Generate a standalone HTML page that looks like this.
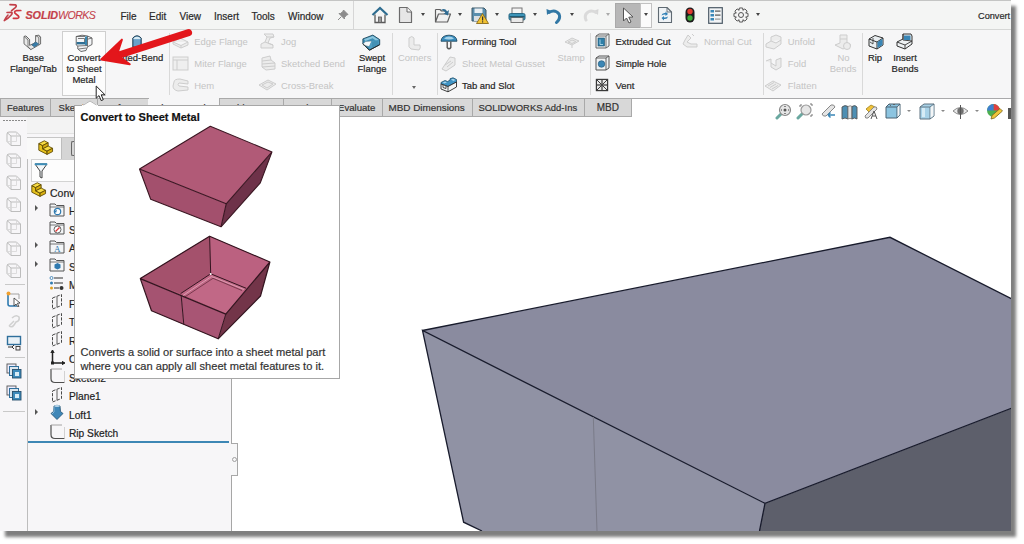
<!DOCTYPE html>
<html><head><meta charset="utf-8">
<style>
*{margin:0;padding:0;box-sizing:border-box}
html,body{width:1024px;height:544px;overflow:hidden;background:#fff;font-family:"Liberation Sans",sans-serif;color:#333}
.a{position:absolute}
#win{position:absolute;left:0;top:0;width:1011px;height:531px;background:#f3f3f3;overflow:hidden;box-shadow:5px 6px 3px rgba(0,0,0,.5)}
.t{position:absolute;white-space:nowrap;font-size:10px;line-height:12px;color:#2a2a2a;-webkit-text-stroke:0.2px currentColor}
</style></head><body>
<div id="win">

<div class="a" style="left:0px;top:0px;width:1012px;height:1px;background:#c4c5c4"></div>
<div class="a" style="left:0px;top:1px;width:1012px;height:28px;background:#f4f5f4"></div>
<div class="a" style="left:0px;top:29px;width:1012px;height:1px;background:#d6d7d6"></div>
<div class="a" style="left:0px;top:30px;width:1012px;height:68px;background:#f6f6f7"></div>
<div class="a" style="left:0px;top:98px;width:1012px;height:1px;background:#a9a9ab"></div>
<div class="a" style="left:0px;top:99px;width:632px;height:18px;background:#f6f6f7"></div>
<div class="a" style="left:232px;top:99px;width:780px;height:432px;background:#fff"></div>
<svg class="a" style="left:0;top:0" width="1012" height="531" viewBox="0 0 1012 531">
<polygon points="422.5,330.5 890,237.3 1012,299 1012,408 765,503.4" fill="#8a8b9f"/>
<polygon points="422.5,330.5 765,503.4 759.5,531 482,531 463.6,522.2" fill="#9092a4"/>
<polygon points="765,503.4 1012,408 1012,531 759.5,531" fill="#5d5f6b"/>
<polyline points="422.5,330.5 890,237.3 1012,299" fill="none" stroke="#181b2c" stroke-width="1.3"/>
<polyline points="482,531 463.6,522.2 422.5,330.5 765,503.4 1012,408" fill="none" stroke="#181b2c" stroke-width="1.3"/>
<line x1="765" y1="503.4" x2="759.5" y2="531" stroke="#181b2c" stroke-width="1.3"/>
<line x1="593.3" y1="417" x2="597" y2="531" stroke="#7a7b88" stroke-width="1"/>
</svg>
<svg class="a" style="left:0px;top:0px;" width="26" height="24" viewBox="0 0 26 24"><path d="M10 4.6 L15.3 4.8 Q17.2 5.6 15.3 7.6 L11.6 10.6" fill="none" stroke="#c23f48" stroke-width="1.7" stroke-linecap="round" stroke-linejoin="round"/>
<path d="M7 12.5 L11.6 12.2 Q12.8 13 11.2 15 Q8.5 18.3 4.3 20.6 Q6 17 8 15" fill="none" stroke="#c23f48" stroke-width="1.6" stroke-linecap="round" stroke-linejoin="round"/>
<path d="M20.8 10.5 L16.2 10.7 Q13.6 11.4 15.2 13.4 L18.4 16 Q19.8 18 17 18.3 L13.4 18.4" fill="none" stroke="#d0363f" stroke-width="1.7" stroke-linecap="round" stroke-linejoin="round"/></svg>
<div class="t" style="left:25.50px;top:9.46px;font-size:10.8px;color:#c4414a;font-weight:normal;font-weight:bold;font-style:italic;letter-spacing:-0.1px;-webkit-text-stroke:0.2px currentColor">SOLID<span style="font-weight:normal;font-size:10.6px;-webkit-text-stroke:0.1px currentColor;letter-spacing:-0.55px">WORKS</span></div>
<div class="t" style="left:120.50px;top:10.93px;font-size:10px;color:#2a2a2a;font-weight:normal;">File</div>
<div class="t" style="left:149.00px;top:10.93px;font-size:10px;color:#2a2a2a;font-weight:normal;">Edit</div>
<div class="t" style="left:179.50px;top:10.93px;font-size:10px;color:#2a2a2a;font-weight:normal;">View</div>
<div class="t" style="left:214.00px;top:10.93px;font-size:10px;color:#2a2a2a;font-weight:normal;">Insert</div>
<div class="t" style="left:251.50px;top:10.93px;font-size:10px;color:#2a2a2a;font-weight:normal;">Tools</div>
<div class="t" style="left:288.00px;top:10.93px;font-size:10px;color:#2a2a2a;font-weight:normal;">Window</div>
<svg class="a" style="left:337px;top:9px;" width="12" height="12" viewBox="0 0 12 12"><path d="M6.5 1 L11 5.5 L9.5 6 L7.5 8.5 L7.5 10 L2 4.5 L3.5 4.5 L6 2.5Z M4.3 7.7 L1 11" fill="#8c8c8c" stroke="#8c8c8c" stroke-width="1"/></svg>
<div class="a" style="left:353px;top:1px;width:1px;height:28px;background:#d6d6d6"></div>
<svg class="a" style="left:371px;top:6px;" width="18" height="18" viewBox="0 0 18 18"><path d="M1.5 9 L9 2 L16.5 9" fill="none" stroke="#2e6d90" stroke-width="2.2"/>
<path d="M4 8.5 V16.5 H14 V8.5" fill="#f4f4f4" stroke="#5a5a5a" stroke-width="1.3"/>
<rect x="7.5" y="11" width="3" height="5.5" fill="#9a9a9a" stroke="#5a5a5a" stroke-width="0.8"/></svg>
<svg class="a" style="left:398px;top:6px;" width="15" height="18" viewBox="0 0 15 18"><path d="M1.5 1.5 H9 L13.5 6 V16.5 H1.5Z" fill="#e6e6e6" stroke="#6b6b6b" stroke-width="1.2" stroke-linejoin="round"/>
<path d="M9 1.5 V6 H13.5" fill="#fafafa" stroke="#6b6b6b" stroke-width="1"/></svg>
<svg class="a" style="left:434px;top:6px;" width="18" height="18" viewBox="0 0 18 18"><path d="M1.5 3.5 H6 L7.5 5 H12 V8 M1.5 3.5 V16 H13.5 L16.5 8 H4.5 L1.5 16" fill="#f0f0f0" stroke="#5f5f5f" stroke-width="1.2" stroke-linejoin="round"/>
<path d="M7 4 Q11 1.5 13 5.5 L15 4 L14 9.5 L9.5 7.5 L11.5 6.8 Q10.5 4.5 7 4Z" fill="#2f6b92"/></svg>
<svg class="a" style="left:471px;top:7px;" width="18" height="17" viewBox="0 0 18 17"><path d="M1 1 H13 L15 3 V14 H1Z" fill="#5a8fae" stroke="#3d5868" stroke-width="1"/>
<rect x="3.5" y="1.5" width="8" height="4.5" fill="#e8eef2"/><rect x="3" y="9" width="9" height="5" fill="#d9dfe3"/>
<path d="M11.5 6.5 L17.5 16.5 H5.5Z" fill="#f1c232" stroke="#8a6a1a" stroke-width="0.9" stroke-linejoin="round"/>
<rect x="11" y="9.5" width="1.2" height="4" fill="#333"/><rect x="11" y="14.3" width="1.2" height="1.2" fill="#333"/></svg>
<svg class="a" style="left:508px;top:7px;" width="18" height="17" viewBox="0 0 18 17"><rect x="4" y="1" width="10" height="6" fill="#f4f4f4" stroke="#777" stroke-width="1"/>
<rect x="1" y="6.5" width="16" height="6.5" rx="1.5" fill="#3c94b8" stroke="#2a6985" stroke-width="1"/>
<rect x="3" y="10.5" width="12" height="5" fill="#e9e9e9" stroke="#666" stroke-width="0.9"/>
<rect x="1.5" y="9" width="15" height="1.2" fill="#1f5a75"/></svg>
<svg class="a" style="left:545px;top:7px;" width="17" height="17" viewBox="0 0 17 17"><path d="M2 8 L1.5 2 L6.5 4 Z" fill="#3278a5"/>
<path d="M4 5.5 Q10 2 14 7 Q16 11.5 11.5 15.5" fill="none" stroke="#3278a5" stroke-width="3" stroke-linecap="round"/></svg>
<svg class="a" style="left:583px;top:7px;" width="17" height="17" viewBox="0 0 17 17"><path d="M15 8 L15.5 2 L10.5 4 Z" fill="#d6d6d6"/>
<path d="M13 5.5 Q7 2 3 7 Q1.5 10 3 13" fill="none" stroke="#dadada" stroke-width="3" stroke-linecap="round"/></svg>
<div class="a" style="left:615px;top:3px;width:26px;height:25px;background:#b7b7b7;border:1px solid #a9a9a9"></div>
<div class="a" style="left:640px;top:3px;width:12px;height:25px;background:#fbfbfb;border:1px solid #c2c2c2"></div>
<svg class="a" style="left:622px;top:7px;" width="13" height="17" viewBox="0 0 13 17"><path d="M1.5 1 V14 L4.5 11 L7 16 L9 15 L6.8 10.2 L11 10 Z" fill="#fff" stroke="#555" stroke-width="1" stroke-linejoin="round"/></svg>
<svg class="a" style="left:657px;top:6px;" width="16" height="18" viewBox="0 0 16 18"><path d="M1.5 1.5 H10 L14.5 6 V16.5 H1.5Z" fill="#eef2f5" stroke="#5f6a72" stroke-width="1.1" stroke-linejoin="round"/>
<path d="M10 1.5 V6 H14.5" fill="none" stroke="#5f6a72" stroke-width="0.9"/>
<path d="M4.5 9.5 Q5 6.5 8.5 7 L8.5 5.5 L11 8 L8.5 10 L8.5 8.5 Q6.5 8.3 4.5 9.5Z M11 10.5 Q10.5 13.5 7 13 L7 14.5 L4.5 12 L7 10 L7 11.5 Q9 11.7 11 10.5Z" fill="#2e7fb5"/></svg>
<svg class="a" style="left:685px;top:7px;" width="10" height="16" viewBox="0 0 10 16"><rect x="0.5" y="0.5" width="9" height="15" rx="4.5" fill="#1c1c1c"/>
<circle cx="5" cy="4.5" r="2.7" fill="#e03a2f"/><circle cx="5" cy="11" r="2.7" fill="#3fae3a"/></svg>
<svg class="a" style="left:708px;top:7px;" width="15" height="17" viewBox="0 0 15 17"><rect x="0.7" y="0.7" width="13.6" height="15.6" fill="#f2f4f6" stroke="#4c5a66" stroke-width="1.2"/>
<rect x="2.5" y="3" width="3.5" height="2.5" fill="#3a87b8"/><rect x="2.5" y="7" width="3.5" height="2.5" fill="#3a87b8"/><rect x="2.5" y="11" width="3.5" height="2.5" fill="#3a87b8"/>
<rect x="7" y="3.5" width="5.5" height="1.2" fill="#555"/><rect x="7" y="7.5" width="5.5" height="1.2" fill="#555"/><rect x="7" y="11.5" width="5.5" height="1.2" fill="#999"/></svg>
<svg class="a" style="left:733px;top:7px;" width="16" height="16" viewBox="0 0 16 16"><polygon points="15.03,6.43 15.03,9.57 12.75,10.12 12.86,9.86 14.08,11.86 11.86,14.08 9.86,12.86 10.12,12.75 9.57,15.03 6.43,15.03 5.88,12.75 6.14,12.86 4.14,14.08 1.92,11.86 3.14,9.86 3.25,10.12 0.97,9.57 0.97,6.43 3.25,5.88 3.14,6.14 1.92,4.14 4.14,1.92 6.14,3.14 5.88,3.25 6.43,0.97 9.57,0.97 10.12,3.25 9.86,3.14 11.86,1.92 14.08,4.14 12.86,6.14 12.75,5.88" fill="#f4f4f4" stroke="#555" stroke-width="1"/><circle cx="8" cy="8" r="2.5" fill="#f4f4f4" stroke="#555" stroke-width="1"/></svg>
<div class="a" style="left:421.0px;top:13.0px;width:0;height:0;border-left:2.5px solid transparent;border-right:2.5px solid transparent;border-top:3.0px solid #444"></div>
<div class="a" style="left:458.0px;top:13.0px;width:0;height:0;border-left:2.5px solid transparent;border-right:2.5px solid transparent;border-top:3.0px solid #444"></div>
<div class="a" style="left:495.0px;top:13.0px;width:0;height:0;border-left:2.5px solid transparent;border-right:2.5px solid transparent;border-top:3.0px solid #444"></div>
<div class="a" style="left:532.5px;top:13.0px;width:0;height:0;border-left:2.5px solid transparent;border-right:2.5px solid transparent;border-top:3.0px solid #444"></div>
<div class="a" style="left:569.5px;top:13.0px;width:0;height:0;border-left:2.5px solid transparent;border-right:2.5px solid transparent;border-top:3.0px solid #444"></div>
<div class="a" style="left:643.5px;top:13.0px;width:0;height:0;border-left:2.5px solid transparent;border-right:2.5px solid transparent;border-top:3.0px solid #444"></div>
<div class="a" style="left:756.0px;top:13.0px;width:0;height:0;border-left:2.5px solid transparent;border-right:2.5px solid transparent;border-top:3.0px solid #444"></div>
<div class="a" style="left:606.0px;top:13.0px;width:0;height:0;border-left:2.5px solid transparent;border-right:2.5px solid transparent;border-top:3.0px solid #aaa"></div>
<div class="t" style="left:978.00px;top:9.61px;font-size:9.2px;color:#2a2a2a;font-weight:normal;">Convert</div>
<div class="a" style="left:61.5px;top:30.5px;width:44px;height:65px;background:#fcfcfc;border:1px solid #cfcfcf"></div>
<svg class="a" style="left:21px;top:33px;" width="22" height="18" viewBox="0 0 22 18"><path d="M3 10.8 L9.8 16.6 L19.6 11 L19.6 4 L17.5 2.3 L14.6 2.6 L14.6 9.2 L12.5 10.5 L8.6 12.4 L8.6 6.6 L4.9 3 L3 3.4Z" fill="#e9e9e9" stroke="#606060" stroke-width="0.9" stroke-linejoin="round"/>
<path d="M3 3.4 L7 7 L7 13.7 M4.9 3 L8.6 6.6 M14.6 2.6 L17.8 4.4 L17.8 11.8 M17.5 2.3 L19.6 4 M7 13.7 L9.8 16.6" fill="none" stroke="#606060" stroke-width="0.8"/>
<path d="M10.8 12 L14.8 9 L17.6 11 L13.5 14Z" fill="#3a7eaa" stroke="#24577a" stroke-width="0.6"/></svg>
<div class="t" style="left:-26.70px;width:120px;text-align:center;top:51.52px;font-size:9.45px;color:#262626;font-weight:normal;">Base</div>
<div class="t" style="left:-26.70px;width:120px;text-align:center;top:62.72px;font-size:9.45px;color:#262626;font-weight:normal;">Flange/Tab</div>
<svg class="a" style="left:73px;top:33px;" width="22" height="20" viewBox="0 0 22 20"><path d="M3.2 3.5 L9 2.2 L14.5 3 L19 5 V11.5 L14.5 13.8 L13 17.5 L8 18.5 L4.8 16 L4.8 13 L3.2 12Z" fill="#f3f5f7" stroke="#5a5a5a" stroke-width="0.9" stroke-linejoin="round"/>
<rect x="3.6" y="9" width="9.6" height="2.4" fill="#2f6f94"/>
<path d="M12 3.6 L14.3 3.3 L14.3 12.5 L12 12.2Z" fill="#3a86ad"/>
<path d="M3.2 3.5 H12 M5 5.5 H11.5 V9 M14.5 3 V13.5 M4.8 13 L14.3 12.5 M19 5 L14.5 6.2 M5.5 16 L13.3 15" fill="none" stroke="#5a5a5a" stroke-width="0.8"/></svg>
<div class="t" style="left:24.00px;width:120px;text-align:center;top:51.52px;font-size:9.45px;color:#262626;font-weight:normal;">Convert</div>
<div class="t" style="left:24.00px;width:120px;text-align:center;top:62.72px;font-size:9.45px;color:#262626;font-weight:normal;">to Sheet</div>
<div class="t" style="left:24.00px;width:120px;text-align:center;top:73.52px;font-size:9.45px;color:#262626;font-weight:normal;">Metal</div>
<svg class="a" style="left:131px;top:34px;" width="12" height="15" viewBox="0 0 12 15"><path d="M1.8 4 Q6 -0.5 10.2 4 L10.2 13 H1.8Z" fill="#5b95c0" stroke="#1f3f55" stroke-width="1"/>
<path d="M2.5 4.2 Q6 1.5 9.5 4.2 L9.5 5.2 H2.5Z" fill="#d8ecf5"/>
<path d="M4 6 V13 M6 6 V13 M8 6 V13" stroke="#8cc0e0" stroke-width="0.6"/></svg>
<div class="t" style="left:77.50px;width:120px;text-align:center;top:51.52px;font-size:9.45px;color:#262626;font-weight:normal;">Lofted-Bend</div>
<div class="a" style="left:168.5px;top:33px;width:1px;height:62px;background:#d9d9d9"></div>
<svg class="a" style="left:172px;top:36px;" width="17" height="13" viewBox="0 0 17 13"><path d="M1 6 L8 2 L16 6 L16 9 L9 12 L1 8Z M1 6 L9 9.5 L16 6 M9 9.5 V12" fill="#ececec" stroke="#cdcdcd" stroke-width="1"/></svg>
<div class="t" style="left:194.30px;top:35.82px;font-size:9.45px;color:#c4c4c4;font-weight:normal;-webkit-text-stroke:0;">Edge Flange</div>
<svg class="a" style="left:172px;top:56px;" width="17" height="15" viewBox="0 0 17 15"><rect x="1" y="1" width="15" height="13" fill="#efefef" stroke="#cdcdcd" stroke-width="1"/><path d="M1 4 H16 M5 4 V14" stroke="#cdcdcd" stroke-width="1" fill="none"/></svg>
<div class="t" style="left:194.30px;top:57.72px;font-size:9.45px;color:#c4c4c4;font-weight:normal;-webkit-text-stroke:0;">Miter Flange</div>
<svg class="a" style="left:172px;top:78px;" width="18" height="14" viewBox="0 0 18 14"><path d="M2 4 Q2 1 8 1 L16 3 L16 6 L7 5 Q5 6 7 8 L16 9 L16 12 L6 13 Q1 12 1 8Z" fill="#ececec" stroke="#cdcdcd" stroke-width="1"/></svg>
<div class="t" style="left:194.30px;top:79.52px;font-size:9.45px;color:#c4c4c4;font-weight:normal;-webkit-text-stroke:0;">Hem</div>
<svg class="a" style="left:259px;top:33px;" width="18" height="16" viewBox="0 0 18 16"><path d="M5 1 L14 1 L15 4 L11 5 L9 10 L14 12 L14 15 L2 15 L2 11 L6 9 L8 4Z M8 4 L15 4 M6 9 L14 12" fill="#ececec" stroke="#cdcdcd" stroke-width="1"/></svg>
<div class="t" style="left:281.00px;top:35.82px;font-size:9.45px;color:#c4c4c4;font-weight:normal;-webkit-text-stroke:0;">Jog</div>
<svg class="a" style="left:260px;top:55px;" width="17" height="16" viewBox="0 0 17 16"><path d="M2 3 L10 1 L11 5 L15 8 L15 14 L6 15 L2 12Z M2 6 L11 5 M2 9 L15 8 M2 12 L15 11" fill="#ececec" stroke="#cdcdcd" stroke-width="1"/></svg>
<div class="t" style="left:281.00px;top:57.72px;font-size:9.45px;color:#c4c4c4;font-weight:normal;-webkit-text-stroke:0;">Sketched Bend</div>
<svg class="a" style="left:258px;top:78px;" width="19" height="14" viewBox="0 0 19 14"><path d="M1 7 L10 2 L18 6 L9 12Z M4 7 L10 4 L15 6 L9 10Z" fill="#ececec" stroke="#cdcdcd" stroke-width="1"/></svg>
<div class="t" style="left:281.00px;top:79.52px;font-size:9.45px;color:#c4c4c4;font-weight:normal;-webkit-text-stroke:0;">Cross-Break</div>
<svg class="a" style="left:362px;top:34px;" width="19" height="17" viewBox="0 0 19 17"><path d="M0.9 4.9 L10.8 1.1 L17.7 5.6 V10.7 L7.4 16.2 L0.9 9.7Z" fill="#3f8fb5" stroke="#1f4a60" stroke-width="0.9" stroke-linejoin="round"/>
<path d="M2 5.2 L10.8 2 L16.6 5.8 L14.5 7 L10.6 4.3 L3.5 7Z" fill="#8cc6de"/>
<path d="M1.3 9.6 L3.6 7.6 L9.8 7 L7.3 12.6 L1.3 11.2Z" fill="#f6f9fb" stroke="#5a7a8a" stroke-width="0.5"/>
<path d="M9.8 7 L14.8 6.2 L16.9 6.3 L16.9 10.3 L7.6 15.2 L7.3 12.6Z" fill="#4f9fc4"/>
<path d="M11 7.5 V13.5 M13 7 V12.5 M15 6.6 V11.4" stroke="#2e7396" stroke-width="0.6"/>
<path d="M0.9 9.7 L7.4 16.2 L17.7 10.7" fill="none" stroke="#2a2a2a" stroke-width="1"/></svg>
<div class="t" style="left:312.00px;width:120px;text-align:center;top:51.52px;font-size:9.45px;color:#262626;font-weight:normal;">Swept</div>
<div class="t" style="left:312.00px;width:120px;text-align:center;top:62.72px;font-size:9.45px;color:#262626;font-weight:normal;">Flange</div>
<div class="a" style="left:392px;top:33px;width:1px;height:62px;background:#d9d9d9"></div>
<svg class="a" style="left:407px;top:35px;" width="15" height="16" viewBox="0 0 15 16"><path d="M2 3 Q5 0 7 3 L7 10 L13 10 Q14 13 12 15 L4 14 Q1 12 2 9Z" fill="#ececec" stroke="#cdcdcd" stroke-width="1"/></svg>
<div class="t" style="left:354.70px;width:120px;text-align:center;top:51.52px;font-size:9.45px;color:#c4c4c4;font-weight:normal;-webkit-text-stroke:0;">Corners</div>
<div class="a" style="left:411.5px;top:85.5px;width:0;height:0;border-left:2.5px solid transparent;border-right:2.5px solid transparent;border-top:3.0px solid #666"></div>
<div class="a" style="left:436.5px;top:33px;width:1px;height:62px;background:#d9d9d9"></div>
<svg class="a" style="left:440px;top:33px;" width="18" height="18" viewBox="0 0 18 18"><path d="M1 8.2 Q1.5 2.2 9 2.2 Q16.5 2.2 17 8.2 Z" fill="#3a8cbd" stroke="#1f4a62" stroke-width="0.9"/>
<path d="M4 5.5 Q6 3.5 9 3.5 Q12 3.5 14 5.5 Q12 6.5 9 6.5 Q6 6.5 4 5.5Z" fill="#a6d3ea"/>
<path d="M7.2 8.5 V14.5 Q9 17 10.8 14.5 V8.5" fill="none" stroke="#555" stroke-width="1.4"/></svg>
<div class="t" style="left:462.00px;top:35.82px;font-size:9.45px;color:#262626;font-weight:normal;">Forming Tool</div>
<svg class="a" style="left:440px;top:55px;" width="17" height="17" viewBox="0 0 17 17"><path d="M2 14 L10 2 L15 3 L15 10 L6 16Z M5 10 L11 6 M7 12 L13 7" fill="#ececec" stroke="#cdcdcd" stroke-width="1"/></svg>
<div class="t" style="left:462.00px;top:57.72px;font-size:9.45px;color:#c4c4c4;font-weight:normal;-webkit-text-stroke:0;">Sheet Metal Gusset</div>
<svg class="a" style="left:440px;top:77px;" width="18" height="16" viewBox="0 0 18 16"><path d="M1 5.5 L5 3.5 L7.5 4.5 L10 3.2 L10 1.8 L13 0.8 L16.5 2.5 V5 L8 9.5 L1 7Z" fill="#3f93c4" stroke="#1f4f6a" stroke-width="0.8" stroke-linejoin="round"/>
<path d="M1 7 L8 9.5 L16.5 5 V10 L8 14.8 L1 12Z" fill="#f4f6f7" stroke="#2a2a2a" stroke-width="0.9" stroke-linejoin="round"/>
<path d="M8 9.5 V14.8 M3 8 V10.5 L6 11.5 V9" fill="none" stroke="#2a2a2a" stroke-width="0.8"/>
<path d="M2.5 5.7 L5 4.5 L7 5.3 L4.5 6.5Z M11 2.5 L13 1.8 L15.5 2.9 L13.3 4Z" fill="#a9d4ea"/></svg>
<div class="t" style="left:462.00px;top:79.52px;font-size:9.45px;color:#262626;font-weight:normal;">Tab and Slot</div>
<svg class="a" style="left:564px;top:37px;" width="16" height="12" viewBox="0 0 16 12"><path d="M1 5 L8 1 L15 4 L8 8Z M4 5 L8 3 L12 4.5 L8 6.5Z M8 8 V11" fill="#ececec" stroke="#cdcdcd" stroke-width="1"/></svg>
<div class="t" style="left:511.20px;width:120px;text-align:center;top:51.52px;font-size:9.45px;color:#c4c4c4;font-weight:normal;-webkit-text-stroke:0;">Stamp</div>
<div class="a" style="left:590px;top:33px;width:1px;height:62px;background:#d9d9d9"></div>
<svg class="a" style="left:595px;top:33px;" width="15" height="16" viewBox="0 0 15 16"><path d="M1 3 L4 1 L14 1 L14 13 L11 15 L1 15Z" fill="#eef1f3" stroke="#666" stroke-width="1"/>
<path d="M1 3 H11 V15 M11 3 L14 1" fill="none" stroke="#666" stroke-width="0.9"/>
<rect x="3" y="5" width="6.5" height="8" fill="#2f7fa8" stroke="#1f4f6a" stroke-width="0.6"/><path d="M5 6.5 V11.5 H8" fill="none" stroke="#bfe3f2" stroke-width="0.8"/></svg>
<div class="t" style="left:615.50px;top:35.82px;font-size:9.45px;color:#262626;font-weight:normal;">Extruded Cut</div>
<svg class="a" style="left:595px;top:55px;" width="15" height="16" viewBox="0 0 15 16"><path d="M1 3 L4 1 L14 1 L14 13 L11 15 L1 15Z" fill="#eef1f3" stroke="#555" stroke-width="1"/>
<path d="M1 3 H11 V15 M11 3 L14 1" fill="none" stroke="#555" stroke-width="0.9"/>
<circle cx="6.5" cy="9" r="3.3" fill="#3b86b5" stroke="#2a5e80" stroke-width="0.7"/></svg>
<div class="t" style="left:615.50px;top:57.72px;font-size:9.45px;color:#262626;font-weight:normal;">Simple Hole</div>
<svg class="a" style="left:595px;top:78px;" width="14" height="14" viewBox="0 0 14 14"><rect x="0.8" y="0.8" width="12.4" height="12.4" fill="#3a3a3a"/>
<rect x="2" y="2" width="4.4" height="4.4" fill="#e8e8e8"/><rect x="7.6" y="2" width="4.4" height="4.4" fill="#e8e8e8"/><rect x="2" y="7.6" width="4.4" height="4.4" fill="#e8e8e8"/><rect x="7.6" y="7.6" width="4.4" height="4.4" fill="#e8e8e8"/>
<path d="M2 2 L6.4 6.4 M12 2 L7.6 6.4 M2 12 L6.4 7.6 M12 12 L7.6 7.6" stroke="#3a3a3a" stroke-width="1"/></svg>
<div class="t" style="left:615.50px;top:79.52px;font-size:9.45px;color:#262626;font-weight:normal;">Vent</div>
<svg class="a" style="left:682px;top:33px;" width="16" height="16" viewBox="0 0 16 16"><path d="M6 2 L9 5 L5 9 L9 11 L15 11 L15 14 L5 14 L1 11 L3 7Z M10 1 L12 3" fill="#ececec" stroke="#cdcdcd" stroke-width="1"/></svg>
<div class="t" style="left:704.00px;top:35.82px;font-size:9.45px;color:#c4c4c4;font-weight:normal;-webkit-text-stroke:0;">Normal Cut</div>
<div class="a" style="left:762.5px;top:33px;width:1px;height:62px;background:#d9d9d9"></div>
<svg class="a" style="left:765px;top:34px;" width="17" height="16" viewBox="0 0 17 16"><path d="M1 10 L6 7 L6 3 L11 1 L16 3 L16 10 L9 15 L1 13Z M6 7 L11 9 L16 6" fill="#ececec" stroke="#cdcdcd" stroke-width="1"/></svg>
<div class="t" style="left:787.80px;top:35.82px;font-size:9.45px;color:#c4c4c4;font-weight:normal;-webkit-text-stroke:0;">Unfold</div>
<svg class="a" style="left:765px;top:56px;" width="17" height="15" viewBox="0 0 17 15"><path d="M1 5 L6 3 L6 11 L11 14 L16 11 L16 2 L11 4 L11 10 L6 7" fill="#ececec" stroke="#cdcdcd" stroke-width="1"/></svg>
<div class="t" style="left:787.80px;top:57.72px;font-size:9.45px;color:#c4c4c4;font-weight:normal;-webkit-text-stroke:0;">Fold</div>
<svg class="a" style="left:764px;top:80px;" width="18" height="12" viewBox="0 0 18 12"><path d="M1 6 L9 1 L17 5 L9 11Z M4 6 L10 2.5 M6 7.5 L12 4 M8 9 L14 5.5" fill="#ececec" stroke="#cdcdcd" stroke-width="1"/></svg>
<div class="t" style="left:787.80px;top:79.52px;font-size:9.45px;color:#c4c4c4;font-weight:normal;-webkit-text-stroke:0;">Flatten</div>
<svg class="a" style="left:834px;top:34px;" width="18" height="17" viewBox="0 0 18 17"><path d="M6 1 L13 1 L13 9 L17 11 L9 15 L1 11 L6 9Z M6 5 H13" fill="#ececec" stroke="#cdcdcd" stroke-width="1"/><circle cx="13" cy="12" r="3.5" fill="#ececec" stroke="#cdcdcd" stroke-width="1"/></svg>
<div class="t" style="left:783.50px;width:120px;text-align:center;top:51.52px;font-size:9.45px;color:#c4c4c4;font-weight:normal;-webkit-text-stroke:0;">No</div>
<div class="t" style="left:783.20px;width:120px;text-align:center;top:62.72px;font-size:9.45px;color:#c4c4c4;font-weight:normal;-webkit-text-stroke:0;">Bends</div>
<div class="a" style="left:861.5px;top:33px;width:1px;height:62px;background:#d9d9d9"></div>
<svg class="a" style="left:868px;top:34px;" width="16" height="16" viewBox="0 0 16 16"><path d="M1 5 L7 1.5 L15 4 L15 11 L9 15 L1 12Z" fill="#e9eef1" stroke="#333" stroke-width="1"/>
<path d="M1 5 L9 8 L15 4 M9 8 V15" fill="none" stroke="#333" stroke-width="1"/>
<path d="M9.5 8 L14.5 4.8 L14.5 11 L9.5 14Z" fill="#3a86b6"/>
<path d="M5 4 L5 10 L2 8" fill="none" stroke="#333" stroke-width="0.8"/></svg>
<div class="t" style="left:815.00px;width:120px;text-align:center;top:51.52px;font-size:9.45px;color:#262626;font-weight:normal;">Rip</div>
<svg class="a" style="left:896px;top:33px;" width="18" height="18" viewBox="0 0 18 18"><path d="M7 1 L15 1 L16 3 L16 11 L9 16 L1 13 L1 9 L7 6Z" fill="#eef1f3" stroke="#333" stroke-width="1"/>
<path d="M7 1 V7 L16 8 M1 9 L9 12 L16 8 M9 12 V16" fill="none" stroke="#333" stroke-width="0.9"/>
<rect x="8" y="2.5" width="6.5" height="4.5" fill="#3a86b6"/></svg>
<div class="t" style="left:845.00px;width:120px;text-align:center;top:51.52px;font-size:9.45px;color:#262626;font-weight:normal;">Insert</div>
<div class="t" style="left:845.00px;width:120px;text-align:center;top:62.72px;font-size:9.45px;color:#262626;font-weight:normal;">Bends</div>
<div class="a" style="left:0px;top:98px;width:50px;height:19px;background:#d8d8d8;border-top:1px solid #a9a9a9;border-bottom:1px solid #a9a9a9;border-left:1px solid #a9a9a9"></div>
<div class="t" style="left:7.00px;top:102.34px;font-size:9.4px;color:#333;font-weight:normal;">Features</div>
<div class="a" style="left:50px;top:98px;width:47px;height:19px;background:#d8d8d8;border-top:1px solid #a9a9a9;border-bottom:1px solid #a9a9a9;border-left:1px solid #a9a9a9"></div>
<div class="t" style="left:58.60px;top:102.31px;font-size:9.5px;color:#333;font-weight:normal;">Sketch</div>
<div class="a" style="left:97px;top:98px;width:51px;height:19px;background:#d8d8d8;border-top:1px solid #a9a9a9;border-bottom:1px solid #a9a9a9;border-left:1px solid #a9a9a9"></div>
<div class="t" style="left:103.00px;top:102.31px;font-size:9.5px;color:#333;font-weight:normal;">Surfaces</div>
<div class="a" style="left:149px;top:98px;width:69.5px;height:19px;background:#f6f6f7"></div>
<div class="t" style="left:155.00px;top:102.01px;font-size:9.5px;color:#2a2a2a;font-weight:normal;">Sheet Metal</div>
<div class="a" style="left:218.5px;top:98px;width:64.0px;height:19px;background:#d8d8d8;border-top:1px solid #a9a9a9;border-bottom:1px solid #a9a9a9;border-left:1px solid #a9a9a9"></div>
<div class="t" style="left:223.00px;top:102.31px;font-size:9.5px;color:#333;font-weight:normal;">Weldments</div>
<div class="a" style="left:282.5px;top:98px;width:48.0px;height:19px;background:#d8d8d8;border-top:1px solid #a9a9a9;border-bottom:1px solid #a9a9a9;border-left:1px solid #a9a9a9"></div>
<div class="t" style="left:290.00px;top:102.31px;font-size:9.5px;color:#333;font-weight:normal;">Markup</div>
<div class="a" style="left:330.5px;top:98px;width:51.0px;height:19px;background:#d8d8d8;border-top:1px solid #a9a9a9;border-bottom:1px solid #a9a9a9;border-left:1px solid #a9a9a9"></div>
<div class="t" style="left:338.00px;top:102.27px;font-size:9.6px;color:#333;font-weight:normal;">Evaluate</div>
<div class="a" style="left:381.5px;top:98px;width:90.5px;height:19px;background:#d8d8d8;border-top:1px solid #a9a9a9;border-bottom:1px solid #a9a9a9;border-left:1px solid #a9a9a9"></div>
<div class="t" style="left:388.50px;top:102.17px;font-size:9.9px;color:#333;font-weight:normal;">MBD Dimensions</div>
<div class="a" style="left:472px;top:98px;width:112px;height:19px;background:#d8d8d8;border-top:1px solid #a9a9a9;border-bottom:1px solid #a9a9a9;border-left:1px solid #a9a9a9"></div>
<div class="t" style="left:478.50px;top:102.32px;font-size:9.45px;color:#333;font-weight:normal;">SOLIDWORKS Add-Ins</div>
<div class="a" style="left:584px;top:98px;width:47px;height:19px;background:#d8d8d8;border-top:1px solid #a9a9a9;border-bottom:1px solid #a9a9a9;border-left:1px solid #a9a9a9"></div>
<div class="t" style="left:596.70px;top:102.13px;font-size:10px;color:#333;font-weight:normal;">MBD</div>
<div class="a" style="left:631px;top:98px;width:1px;height:19px;background:#a9a9a9"></div>
<div class="a" style="left:0px;top:117px;width:27px;height:414px;background:#f7f6f8"></div>
<div class="a" style="left:3px;top:120px;width:1.5px;height:1px;background:#8a8a8a"></div>
<div class="a" style="left:6px;top:120px;width:1.5px;height:1px;background:#8a8a8a"></div>
<div class="a" style="left:9px;top:120px;width:1.5px;height:1px;background:#8a8a8a"></div>
<div class="a" style="left:12px;top:120px;width:1.5px;height:1px;background:#8a8a8a"></div>
<div class="a" style="left:15px;top:120px;width:1.5px;height:1px;background:#8a8a8a"></div>
<div class="a" style="left:18px;top:120px;width:1.5px;height:1px;background:#8a8a8a"></div>
<div class="a" style="left:21px;top:120px;width:1.5px;height:1px;background:#8a8a8a"></div>
<div class="a" style="left:24px;top:120px;width:1.5px;height:1px;background:#8a8a8a"></div>
<svg class="a" style="left:6px;top:131px;" width="16" height="16" viewBox="0 0 16 16"><path d="M1 3 Q1 1 3 1 H10.5 L14.5 5 V14.5 H5 L1 10.5Z" fill="none" stroke="#bdbdbd" stroke-width="1"/><path d="M5 5 H14.5 M5 5 V14.5 M1 1.5 L5 5" fill="none" stroke="#bdbdbd" stroke-width="1"/><path d="M1 10.5 H10.5 V1" fill="none" stroke="#d6d6d6" stroke-width="0.8"/></svg>
<svg class="a" style="left:6px;top:153px;" width="16" height="16" viewBox="0 0 16 16"><path d="M1 3 Q1 1 3 1 H10.5 L14.5 5 V14.5 H5 L1 10.5Z" fill="none" stroke="#bdbdbd" stroke-width="1"/><path d="M5 5 H14.5 M5 5 V14.5 M1 1.5 L5 5" fill="none" stroke="#bdbdbd" stroke-width="1"/><path d="M1 10.5 H10.5 V1" fill="none" stroke="#d6d6d6" stroke-width="0.8"/></svg>
<svg class="a" style="left:6px;top:175px;" width="16" height="16" viewBox="0 0 16 16"><path d="M1 3 Q1 1 3 1 H10.5 L14.5 5 V14.5 H5 L1 10.5Z" fill="none" stroke="#bdbdbd" stroke-width="1"/><path d="M5 5 H14.5 M5 5 V14.5 M1 1.5 L5 5" fill="none" stroke="#bdbdbd" stroke-width="1"/><path d="M1 10.5 H10.5 V1" fill="none" stroke="#d6d6d6" stroke-width="0.8"/></svg>
<svg class="a" style="left:6px;top:197px;" width="16" height="16" viewBox="0 0 16 16"><path d="M1 3 Q1 1 3 1 H10.5 L14.5 5 V14.5 H5 L1 10.5Z" fill="none" stroke="#bdbdbd" stroke-width="1"/><path d="M5 5 H14.5 M5 5 V14.5 M1 1.5 L5 5" fill="none" stroke="#bdbdbd" stroke-width="1"/><path d="M1 10.5 H10.5 V1" fill="none" stroke="#d6d6d6" stroke-width="0.8"/></svg>
<svg class="a" style="left:6px;top:219px;" width="16" height="16" viewBox="0 0 16 16"><path d="M1 3 Q1 1 3 1 H10.5 L14.5 5 V14.5 H5 L1 10.5Z" fill="none" stroke="#bdbdbd" stroke-width="1"/><path d="M5 5 H14.5 M5 5 V14.5 M1 1.5 L5 5" fill="none" stroke="#bdbdbd" stroke-width="1"/><path d="M1 10.5 H10.5 V1" fill="none" stroke="#d6d6d6" stroke-width="0.8"/></svg>
<svg class="a" style="left:6px;top:241px;" width="16" height="16" viewBox="0 0 16 16"><path d="M1 3 Q1 1 3 1 H10.5 L14.5 5 V14.5 H5 L1 10.5Z" fill="none" stroke="#bdbdbd" stroke-width="1"/><path d="M5 5 H14.5 M5 5 V14.5 M1 1.5 L5 5" fill="none" stroke="#bdbdbd" stroke-width="1"/><path d="M1 10.5 H10.5 V1" fill="none" stroke="#d6d6d6" stroke-width="0.8"/></svg>
<svg class="a" style="left:6px;top:263px;" width="16" height="16" viewBox="0 0 16 16"><path d="M1 3 Q1 1 3 1 H10.5 L14.5 5 V14.5 H5 L1 10.5Z" fill="none" stroke="#bdbdbd" stroke-width="1"/><path d="M5 5 H14.5 M5 5 V14.5 M1 1.5 L5 5" fill="none" stroke="#bdbdbd" stroke-width="1"/><path d="M1 10.5 H10.5 V1" fill="none" stroke="#d6d6d6" stroke-width="0.8"/></svg>
<div class="a" style="left:5px;top:284px;width:20px;height:1px;background:#c9c9c9"></div>
<svg class="a" style="left:6px;top:291px;" width="16" height="16" viewBox="0 0 16 16"><path d="M2 3 V13 Q2 15 4 15 H11" fill="none" stroke="#2f7ab0" stroke-width="1.6"/><path d="M2 3 H13 V8" fill="none" stroke="#999" stroke-width="0.9"/>
<circle cx="2.5" cy="2.5" r="2" fill="#f0a030"/><path d="M8 7 L8 15 L10 13 L12 16 L13 15.3 L11.3 12.3 L14 12Z" fill="#fff" stroke="#333" stroke-width="0.8"/></svg>
<svg class="a" style="left:6px;top:313px;" width="16" height="16" viewBox="0 0 16 16"><path d="M3 13 L8 8 M6 5 Q10 1 13 4 Q14 8 10 9 L8 12 Q6 15 3 13" fill="none" stroke="#d0d0d0" stroke-width="1.5"/></svg>
<svg class="a" style="left:6px;top:335px;" width="16" height="16" viewBox="0 0 16 16"><rect x="1.5" y="1.5" width="13" height="8" fill="#e9f1f7" stroke="#2f6f9c" stroke-width="1.4"/>
<path d="M2 12 H6 L8 14 M6 12 L8 10" fill="none" stroke="#333" stroke-width="1"/><rect x="10" y="11.5" width="4" height="3.5" fill="none" stroke="#333" stroke-width="0.9"/></svg>
<div class="a" style="left:5px;top:357px;width:20px;height:1px;background:#c9c9c9"></div>
<div class="a" style="left:3px;top:411px;width:22px;height:1px;background:#c9c9c9"></div>
<svg class="a" style="left:6px;top:363px;" width="16" height="16" viewBox="0 0 16 16"><rect x="1" y="1" width="9" height="9" fill="#eef" stroke="#555" stroke-width="0.9"/>
<rect x="3.5" y="3.5" width="9" height="9" fill="#dde6ee" stroke="#2f6f9c" stroke-width="1"/>
<rect x="6.5" y="6.5" width="8.5" height="8.5" fill="#3d8abb" stroke="#264f6c" stroke-width="0.9"/>
<rect x="9" y="9" width="4" height="4" fill="#d8ecf7"/></svg>
<svg class="a" style="left:6px;top:385px;" width="16" height="16" viewBox="0 0 16 16"><rect x="1" y="1" width="9" height="9" fill="#eef" stroke="#555" stroke-width="0.9"/>
<rect x="3.5" y="3.5" width="9" height="9" fill="#dde6ee" stroke="#2f6f9c" stroke-width="1"/>
<rect x="6.5" y="6.5" width="8.5" height="8.5" fill="#3d8abb" stroke="#264f6c" stroke-width="0.9"/>
<rect x="9" y="9" width="4" height="4" fill="#d8ecf7"/></svg>
<div class="a" style="left:27px;top:117px;width:205px;height:414px;background:#f7f6f8;border-right:1px solid #a6a6a6"></div>
<div class="a" style="left:27px;top:159px;width:1px;height:372px;background:#bdbdbd"></div>
<div class="a" style="left:27px;top:117px;width:204px;height:17px;background:#f3f3f3"></div>
<div class="a" style="left:27px;top:133px;width:204px;height:1px;background:#e2e2e2"></div>
<div class="a" style="left:27px;top:137px;width:204px;height:1px;background:#c6c6c6"></div>
<div class="a" style="left:27px;top:138px;width:34px;height:21px;background:#f9f9f9"></div>
<div class="a" style="left:61px;top:138px;width:14px;height:21px;background:#d5d5d5;border-left:1px solid #bdbdbd"></div>
<div class="a" style="left:71px;top:141px;width:4px;height:15px;border:1px solid #666;border-right:none;border-radius:2px 0 0 2px"></div>
<svg class="a" style="left:38px;top:140px;" width="16" height="16" viewBox="0 0 16 16"><polygon points="0.80,10.20 0.80,3.60 4.65,5.56 4.65,8.86 9.05,11.10 9.05,14.40" fill="#e6c21e" stroke="#5a4600" stroke-width="0.85" stroke-linejoin="round"/><polygon points="6.30,0.80 10.15,2.76 4.65,5.56 0.80,3.60" fill="#f7dc45" stroke="#5a4600" stroke-width="0.85" stroke-linejoin="round"/><polygon points="10.15,2.76 4.65,5.56 4.65,8.86 10.15,6.06" fill="#d9b010" stroke="#5a4600" stroke-width="0.85" stroke-linejoin="round"/><polygon points="10.15,6.06 14.55,8.30 9.05,11.10 4.65,8.86" fill="#f7dc45" stroke="#5a4600" stroke-width="0.85" stroke-linejoin="round"/><polygon points="14.55,8.30 9.05,11.10 9.05,14.40 14.55,11.60" fill="#d9b010" stroke="#5a4600" stroke-width="0.85" stroke-linejoin="round"/></svg>
<div class="a" style="left:31px;top:159px;width:44px;height:23px;background:#fdfdfd;border:1px solid #d3d3d3;border-right:none"></div>
<svg class="a" style="left:34px;top:162px;" width="14" height="18" viewBox="0 0 14 18"><path d="M1 2 H13 L8 9 V16 L6 15 V9Z" fill="#f3f7f9" stroke="#444" stroke-width="1"/>
<path d="M0.8 1.2 H13.2 V3.2 H0.8Z" fill="#3d8fb9"/></svg>
<svg class="a" style="left:30.5px;top:182px;" width="16" height="16" viewBox="0 0 16 16"><polygon points="0.80,10.20 0.80,3.60 4.65,5.56 4.65,8.86 9.05,11.10 9.05,14.40" fill="#e6c21e" stroke="#5a4600" stroke-width="0.85" stroke-linejoin="round"/><polygon points="6.30,0.80 10.15,2.76 4.65,5.56 0.80,3.60" fill="#f7dc45" stroke="#5a4600" stroke-width="0.85" stroke-linejoin="round"/><polygon points="10.15,2.76 4.65,5.56 4.65,8.86 10.15,6.06" fill="#d9b010" stroke="#5a4600" stroke-width="0.85" stroke-linejoin="round"/><polygon points="10.15,6.06 14.55,8.30 9.05,11.10 4.65,8.86" fill="#f7dc45" stroke="#5a4600" stroke-width="0.85" stroke-linejoin="round"/><polygon points="14.55,8.30 9.05,11.10 9.05,14.40 14.55,11.60" fill="#d9b010" stroke="#5a4600" stroke-width="0.85" stroke-linejoin="round"/></svg>
<div class="t" style="left:50.00px;top:186.66px;font-size:10.5px;color:#222;font-weight:normal;">Conv</div>
<svg class="a" style="left:49px;top:201px;" width="16" height="17" viewBox="0 0 16 17"><path d="M1 3 H6 L7.5 4.5 H15 V15 H1Z" fill="#f3f5f7" stroke="#555" stroke-width="1"/><path d="M1 6 H15" stroke="#555" stroke-width="0.8"/><circle cx="8.5" cy="10.5" r="3.2" fill="#fff" stroke="#2f7ab0" stroke-width="1.2"/><path d="M5 10 L7 12 L8 9" fill="#2f7ab0"/></svg>
<svg class="a" style="left:49px;top:219px;" width="16" height="17" viewBox="0 0 16 17"><path d="M1 3 H6 L7.5 4.5 H15 V15 H1Z" fill="#f3f5f7" stroke="#555" stroke-width="1"/><path d="M1 6 H15" stroke="#555" stroke-width="0.8"/><circle cx="8.5" cy="10.5" r="3.5" fill="#fff" stroke="#555" stroke-width="0.9"/><path d="M6.5 12.5 L10.5 8.5" stroke="#d33" stroke-width="1.3"/></svg>
<svg class="a" style="left:49px;top:238px;" width="16" height="17" viewBox="0 0 16 17"><path d="M1 3 H6 L7.5 4.5 H15 V15 H1Z" fill="#f3f5f7" stroke="#555" stroke-width="1"/><path d="M1 6 H15" stroke="#555" stroke-width="0.8"/><text x="5" y="14" font-size="9" font-family="Liberation Serif" fill="#2f7ab0">A</text></svg>
<svg class="a" style="left:49px;top:256px;" width="16" height="17" viewBox="0 0 16 17"><path d="M1 3 H6 L7.5 4.5 H15 V15 H1Z" fill="#f3f5f7" stroke="#555" stroke-width="1"/><path d="M1 6 H15" stroke="#555" stroke-width="0.8"/><path d="M8.5 7 L11.5 8.5 V12 L8.5 13.5 L5.5 12 V8.5Z" fill="#2f7ab0"/></svg>
<svg class="a" style="left:49px;top:275px;" width="16" height="17" viewBox="0 0 16 17"><circle cx="2.5" cy="3" r="1.5" fill="none" stroke="#2f7ab0" stroke-width="0.8"/><circle cx="2.5" cy="8" r="1.5" fill="#2f7ab0"/><circle cx="2.5" cy="13" r="1.5" fill="#e0a020"/><path d="M5 3 H14 M5 8 H14 M5 13 H10" stroke="#333" stroke-width="1.2"/><circle cx="12.5" cy="13" r="2" fill="#333"/></svg>
<svg class="a" style="left:49px;top:293px;" width="16" height="17" viewBox="0 0 16 17"><path d="M3.5 5 L12.5 1.5 V12.5 L3.5 16Z" fill="none" stroke="#4a4a4a" stroke-width="1" stroke-dasharray="3.2 1.3"/><path d="M8 3.5 V14.2" stroke="#4a4a4a" stroke-width="0.9"/></svg>
<svg class="a" style="left:49px;top:312px;" width="16" height="17" viewBox="0 0 16 17"><path d="M3.5 5 L12.5 1.5 V12.5 L3.5 16Z" fill="none" stroke="#4a4a4a" stroke-width="1" stroke-dasharray="3.2 1.3"/><path d="M8 3.5 V14.2" stroke="#4a4a4a" stroke-width="0.9"/></svg>
<svg class="a" style="left:49px;top:330px;" width="16" height="17" viewBox="0 0 16 17"><path d="M3.5 5 L12.5 1.5 V12.5 L3.5 16Z" fill="none" stroke="#4a4a4a" stroke-width="1" stroke-dasharray="3.2 1.3"/><path d="M8 3.5 V14.2" stroke="#4a4a4a" stroke-width="0.9"/></svg>
<svg class="a" style="left:49px;top:349px;" width="16" height="17" viewBox="0 0 16 17"><path d="M3.5 1.5 V14 H15.5" fill="none" stroke="#222" stroke-width="1.5"/><path d="M1.8 4 L3.5 1 L5.2 4 M13 12.3 L16 14 L13 15.7" fill="#222" stroke="#222" stroke-width="0.9"/><rect x="2" y="12.5" width="3" height="3" fill="#222"/></svg>
<svg class="a" style="left:49px;top:367px;" width="16" height="17" viewBox="0 0 16 17"><path d="M2 2 V11.5 Q2 15.5 6 15.5 H15.5" fill="none" stroke="#4f4f4f" stroke-width="1.2"/><path d="M2 2 H13" fill="none" stroke="#9a9a9a" stroke-width="0.9"/><path d="M15.5 4 V15.5" fill="none" stroke="#c8c8c8" stroke-width="0.8"/></svg>
<svg class="a" style="left:49px;top:386px;" width="16" height="17" viewBox="0 0 16 17"><path d="M3.5 5 L12.5 1.5 V12.5 L3.5 16Z" fill="none" stroke="#4a4a4a" stroke-width="1" stroke-dasharray="3.2 1.3"/><path d="M8 3.5 V14.2" stroke="#4a4a4a" stroke-width="0.9"/></svg>
<svg class="a" style="left:49px;top:404px;" width="16" height="17" viewBox="0 0 16 17"><path d="M5 2 Q8 0.5 11 2 L11.5 7.5 L14 9.5 L8 15.5 L2 9.5 L4.5 7.5Z" fill="#3f87b8" stroke="#1f5070" stroke-width="0.8" stroke-linejoin="round"/><ellipse cx="8" cy="2" rx="3" ry="1" fill="#b9d6ea"/><path d="M5 3 V8 L3 10" fill="none" stroke="#9cc8e6" stroke-width="0.8"/></svg>
<svg class="a" style="left:49px;top:423px;" width="16" height="17" viewBox="0 0 16 17"><path d="M2 2 V11.5 Q2 15.5 6 15.5 H15.5" fill="none" stroke="#4f4f4f" stroke-width="1.2"/><path d="M2 2 H13" fill="none" stroke="#9a9a9a" stroke-width="0.9"/><path d="M15.5 4 V15.5" fill="none" stroke="#c8c8c8" stroke-width="0.8"/></svg>
<div class="a" style="left:35px;top:205px;width:0;height:0;border-top:3.5px solid transparent;border-bottom:3.5px solid transparent;border-left:3.5px solid #555"></div>
<div class="a" style="left:35px;top:242px;width:0;height:0;border-top:3.5px solid transparent;border-bottom:3.5px solid transparent;border-left:3.5px solid #555"></div>
<div class="a" style="left:35px;top:260.5px;width:0;height:0;border-top:3.5px solid transparent;border-bottom:3.5px solid transparent;border-left:3.5px solid #555"></div>
<div class="a" style="left:35px;top:408.5px;width:0;height:0;border-top:3.5px solid transparent;border-bottom:3.5px solid transparent;border-left:3.5px solid #555"></div>
<div class="t" style="left:69.00px;top:206.06px;font-size:10.2px;color:#222;font-weight:normal;">History</div>
<div class="t" style="left:69.00px;top:224.56px;font-size:10.2px;color:#222;font-weight:normal;">Sensors</div>
<div class="t" style="left:69.00px;top:243.06px;font-size:10.2px;color:#222;font-weight:normal;">Annotations</div>
<div class="t" style="left:69.00px;top:261.56px;font-size:10.2px;color:#222;font-weight:normal;">Solid Bodies</div>
<div class="t" style="left:69.00px;top:280.06px;font-size:10.2px;color:#222;font-weight:normal;">Material</div>
<div class="t" style="left:69.00px;top:298.56px;font-size:10.2px;color:#222;font-weight:normal;">Front Plane</div>
<div class="t" style="left:69.00px;top:317.06px;font-size:10.2px;color:#222;font-weight:normal;">Top Plane</div>
<div class="t" style="left:69.00px;top:335.56px;font-size:10.2px;color:#222;font-weight:normal;">Right Plane</div>
<div class="t" style="left:69.00px;top:354.06px;font-size:10.2px;color:#222;font-weight:normal;">Origin</div>
<div class="t" style="left:69.00px;top:372.56px;font-size:10.2px;color:#222;font-weight:normal;">Sketch2</div>
<div class="t" style="left:69.00px;top:391.06px;font-size:10.2px;color:#222;font-weight:normal;">Plane1</div>
<div class="t" style="left:69.00px;top:409.56px;font-size:10.2px;color:#222;font-weight:normal;">Loft1</div>
<div class="t" style="left:69.00px;top:428.06px;font-size:10.2px;color:#222;font-weight:normal;">Rip Sketch</div>
<div class="a" style="left:28px;top:441px;width:201px;height:2px;background:#3d87b5"></div>
<div class="a" style="left:231px;top:443px;width:7px;height:33px;background:#f7f7f8;border:1px solid #a8a8a8;border-left:none"></div>
<div class="a" style="left:231.5px;top:456.5px;width:5px;height:5px;border:1px solid #a0a0a0;border-radius:50%"></div>
<svg class="a" style="left:775px;top:103px;" width="17" height="17" viewBox="0 0 17 17"><path d="M2 15 L6.5 10.5" stroke="#6aa8a0" stroke-width="3" stroke-linecap="round"/>
<circle cx="10" cy="7" r="5.5" fill="#e6e6e6" stroke="#888" stroke-width="1.2"/>
<circle cx="10" cy="7" r="1.5" fill="#555"/><path d="M10 3 V4 M10 10 V11 M6 7 H7 M13 7 H14" stroke="#444" stroke-width="1.2"/></svg>
<svg class="a" style="left:796px;top:103px;" width="18" height="17" viewBox="0 0 18 17"><path d="M2 15 L6.5 10.5" stroke="#6aa8a0" stroke-width="3" stroke-linecap="round"/>
<circle cx="10" cy="7" r="5" fill="#e6e6e6" stroke="#999" stroke-width="1.2"/>
<path d="M4 2 H6 M4 2 V4 M14 1 H16 V3 M16 11 V13 H14" fill="none" stroke="#777" stroke-width="1"/></svg>
<svg class="a" style="left:820px;top:103px;" width="17" height="17" viewBox="0 0 17 17"><path d="M2 11 L11 2 Q14 1 15 4 L6 13 Q3 14 2 11Z" fill="#e4e4e4" stroke="#888" stroke-width="1"/>
<path d="M8 12 H15 M8 12 L10.5 9.5 M8 12 L10.5 14.5" fill="none" stroke="#3a86b6" stroke-width="1.5"/></svg>
<svg class="a" style="left:841px;top:104px;" width="17" height="16" viewBox="0 0 17 16"><path d="M1 3 Q4 0.5 7 2.5 V15 Q4 13 1 15Z" fill="#4e8fb3" stroke="#555" stroke-width="0.9"/>
<path d="M7 2.5 Q9.5 1 11 2.5 V15 Q9 13.5 7 15Z" fill="#e4e4e4" stroke="#777" stroke-width="0.8"/>
<path d="M11 2.5 Q14 0.5 16 3 V15 Q13.5 13 11 15Z" fill="#4e8fb3" stroke="#555" stroke-width="0.9"/></svg>
<svg class="a" style="left:863px;top:103px;" width="16" height="17" viewBox="0 0 16 17"><path d="M3 6 L8 2 L12 4 L6 9Z" fill="#f0c23a" stroke="#a0801a" stroke-width="0.8"/>
<path d="M2 13 L11 4 Q14 3 14 6 L5 15 Q2 16 2 13Z" fill="#e4e4e4" stroke="#888" stroke-width="1"/>
<path d="M8 16 L11 8 L14 16 M9.2 13 H12.8" fill="none" stroke="#555" stroke-width="1"/></svg>
<svg class="a" style="left:885px;top:103px;" width="16" height="17" viewBox="0 0 16 17"><path d="M1 4 L4 1 H15 V12 L12 15 H1Z" fill="#8cc4e0" stroke="#4b6373" stroke-width="1"/>
<path d="M1 4 H12 V15 M12 4 L15 1" fill="none" stroke="#4b6373" stroke-width="1"/>
<path d="M12.5 4 L14.5 2 V12 L12.5 14Z" fill="#f2f2f2"/><path d="M4.5 1.5 L6 3 M8 1.5 H10" stroke="#555" stroke-width="0.8"/></svg>
<div class="a" style="left:907.4px;top:109.5px;width:0;height:0;border-left:2.2px solid transparent;border-right:2.2px solid transparent;border-top:2.7px solid #888"></div>
<svg class="a" style="left:919px;top:103px;" width="17" height="17" viewBox="0 0 17 17"><path d="M1 4 L5 1 H15 V13 L11 16 H1Z" fill="#a8d2e8" stroke="#5e7280" stroke-width="1"/>
<path d="M1 4 H11 V16 M11 4 L15 1" fill="none" stroke="#5e7280" stroke-width="0.9"/>
<path d="M11.5 4.2 L14.5 2 V12.8 L11.5 15Z" fill="#f4f6f7"/><rect x="3" y="5" width="3" height="9" fill="#d7ecf6"/></svg>
<div class="a" style="left:940.8px;top:109.5px;width:0;height:0;border-left:2.2px solid transparent;border-right:2.2px solid transparent;border-top:2.7px solid #888"></div>
<svg class="a" style="left:952px;top:103px;" width="17" height="17" viewBox="0 0 17 17"><path d="M1 8 Q8.5 1 16 8 Q8.5 15 1 8Z" fill="#e9e9e9" stroke="#8a8a8a" stroke-width="1"/>
<circle cx="8.5" cy="8" r="3.2" fill="#6f6f6f"/><path d="M8.5 2 V16" stroke="#555" stroke-width="1"/></svg>
<div class="a" style="left:974.8px;top:109.5px;width:0;height:0;border-left:2.2px solid transparent;border-right:2.2px solid transparent;border-top:2.7px solid #888"></div>
<svg class="a" style="left:986px;top:103px;" width="18" height="17" viewBox="0 0 18 17"><circle cx="7.5" cy="7.5" r="6.5" fill="#4caf50"/>
<path d="M7.5 7.5 L7.5 1 A6.5 6.5 0 0 1 14 7.5Z" fill="#e04040"/>
<path d="M7.5 7.5 L1 7.5 A6.5 6.5 0 0 1 7.5 1Z" fill="#3f7fd0"/>
<path d="M5 16 L6 12.5 L14 5.5 L16.5 8 L8.5 15Z" fill="#f0c53a" stroke="#7a6420" stroke-width="0.8"/></svg>
<div class="a" style="left:1008px;top:108px;width:4px;height:11px;background:#555"></div>
<div class="a" style="left:73.5px;top:104.8px;width:266px;height:274px;background:#fff;border:1px solid #a7a7a7"></div>
<svg class="a" style="left:82px;top:99px" width="16" height="8" viewBox="0 0 16 8"><path d="M0 6.3 L8 1.8 L16 6.3 V8 H0Z" fill="#fff"/><path d="M1.5 6 L8 2 L14.5 6" fill="none" stroke="#b5b5b5" stroke-width="1"/></svg>
<div class="t" style="left:80.50px;top:110.89px;font-size:11px;color:#111;font-weight:bold;">Convert to Sheet Metal</div>
<svg class="a" style="left:130px;top:120px" width="150" height="225" viewBox="130 120 150 225">
<polygon points="210.3,126.3 272,151.9 226.2,203.8 139.5,169" fill="#b15a77"/>
<polygon points="139.5,169 226.2,203.8 221,226.8 150.7,199.2" fill="#a3506d"/>
<polygon points="226.2,203.8 272,151.9 260.3,182.8 221,226.8" fill="#6e3249"/>
<polyline points="139.5,169 210.3,126.3 272,151.9 260.3,182.8 221,226.8 150.7,199.2 139.5,169 226.2,203.8 272,151.9" fill="none" stroke="#3a1622" stroke-width="1.1" stroke-linejoin="round"/>
<line x1="226.2" y1="203.8" x2="221" y2="226.8" stroke="#3a1622" stroke-width="1.1"/>
<polygon points="209.6,236.2 269.9,262 225.8,314.1 140.3,278.6" fill="#b65c79"/>
<polygon points="209.6,236.2 210.7,273.8 180.6,293.6 140.3,278.6" fill="#a4516c"/>
<polygon points="209.6,236.2 269.9,262 246.2,288.3 210.7,273.8" fill="#bb6180"/>
<polygon points="210.7,273.8 246.2,288.3 225.8,314.1 180.6,293.6" fill="#c16886"/>
<polygon points="140.3,278.6 181.2,295.8 183.8,324.4 151.5,310.8" fill="#a55371"/>
<polygon points="181.2,295.8 225.8,314.1 218.2,338.8 183.8,324.4" fill="#a85574"/>
<polygon points="225.8,314.1 269.9,262 260.5,296 218.2,338.8" fill="#733549"/>
<polyline points="140.3,278.6 209.6,236.2 269.9,262 260.5,296 218.2,338.8 151.5,310.8 140.3,278.6 225.8,314.1 269.9,262" fill="none" stroke="#33141f" stroke-width="1.2" stroke-linejoin="round"/>
<path d="M225.8 314.1 L218.2 338.8 M209.6 236.2 L210.7 273.8 L180.6 293.6 M210.7 273.8 L246.2 288.3 M181.2 295.8 L183.8 324.4" fill="none" stroke="#33141f" stroke-width="1"/>
<path d="M183 295.5 L211.5 276.5 L244 289.5" fill="none" stroke="#e6b0c2" stroke-width="0.7"/>
<path d="M184 297.5 L213 278.3 L242 290.5" fill="none" stroke="#5a2435" stroke-width="0.7"/>
<circle cx="210.7" cy="274" r="1" fill="#fff"/>
</svg>
<div class="t" style="left:80.50px;top:345.75px;font-size:11.1px;color:#333;font-weight:normal;">Converts a solid or surface into a sheet metal part</div>
<div class="t" style="left:80.50px;top:359.75px;font-size:11.1px;color:#333;font-weight:normal;">where you can apply all sheet metal features to it.</div>
<svg class="a" style="left:0;top:0" width="260" height="100" viewBox="0 0 260 100">
<path d="M121 54.3 L188.6 32.6" stroke="#e3161b" stroke-width="7" stroke-linecap="round"/>
<path d="M101.2 59.5 L121.9 39.6 L118.3 50.6 L121 57.8 L129.8 64.2 Z" fill="#e3161b" stroke="#e3161b" stroke-width="2" stroke-linejoin="round"/>
</svg>
<svg class="a" style="left:95px;top:85px;" width="12" height="17" viewBox="0 0 12 17"><path d="M1.2 1 V13.2 L4 10.6 L6.2 15.6 L8.3 14.7 L6.2 9.8 L10 9.8Z" fill="#fff" stroke="#222" stroke-width="1" stroke-linejoin="round"/></svg>
</div>
</body></html>
